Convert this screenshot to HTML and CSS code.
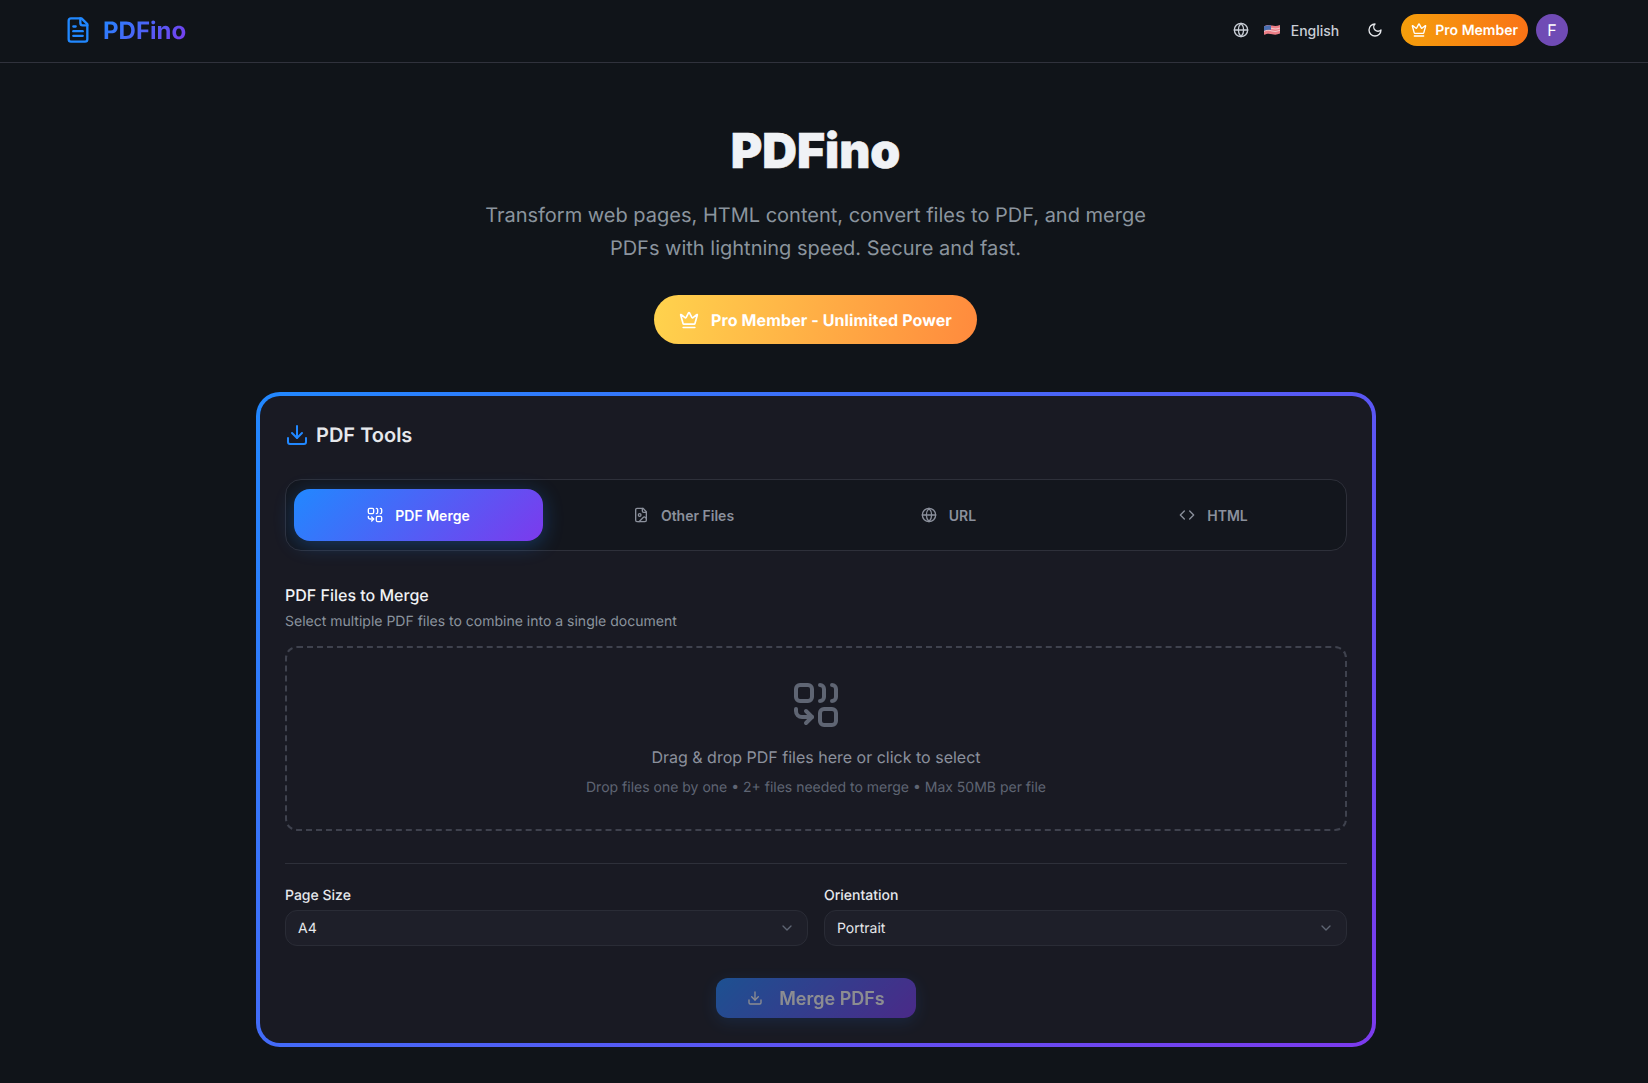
FILE: index.html
```html
<!DOCTYPE html>
<html lang="en">
<head>
  <meta charset="UTF-8">
  <meta name="viewport" content="width=device-width, initial-scale=1.0">
  <title>PDFino</title>
  <link rel="stylesheet" href="styles.css">
</head>
<body>
  <header class="topbar">
    <div class="topbar-inner">
      <a class="logo" href="#">
        <svg class="icon logo-icon" viewBox="0 0 24 24"><path d="M15 2H6a2 2 0 0 0-2 2v16a2 2 0 0 0 2 2h12a2 2 0 0 0 2-2V7Z"/><path d="M14 2v4a2 2 0 0 0 2 2h4"/><path d="M10 9H8"/><path d="M16 13H8"/><path d="M16 17H8"/></svg>
        <span class="logo-text">PDFino</span>
      </a>
      <div class="topbar-actions">
        <button class="lang">
          <svg class="icon lang-globe" viewBox="0 0 24 24"><circle cx="12" cy="12" r="10"/><path d="M12 2a14.5 14.5 0 0 0 0 20 14.5 14.5 0 0 0 0-20"/><path d="M2 12h20"/></svg>
          <svg class="flag" viewBox="0 0 16 12">
            <path d="M0 2.2C3 .8 5 .8 8 1.6s5 .6 8-.6v8.6c-3 1.2-5 1.4-8 .6s-5-.8-8 .6z" fill="#ec7f87"/>
            <path d="M0 4.6c3-1.4 5-1.4 8-.6s5 .6 8-.6v1c-3 1.2-5 1.4-8 .6s-5-.8-8 .6zM0 7c3-1.4 5-1.4 8-.6s5 .6 8-.6v1c-3 1.2-5 1.4-8 .6s-5-.8-8 .6z" fill="#f2c9cc"/>
            <path d="M0 2.2c2.500-1.100 4.500-1.200 7-.8v4.500c-2.500-.4-4.500-.3-7 .8z" fill="#4a6fb0"/>
          </svg>
          <span>English</span>
        </button>
        <button class="theme-toggle">
          <svg class="icon" viewBox="0 0 24 24"><path d="M12 3a6 6 0 0 0 9 9 9 9 0 1 1-9-9Z"/></svg>
        </button>
        <div class="pro-badge">
          <svg class="icon" viewBox="0 0 24 24"><path d="M11.562 3.266a.5.5 0 0 1 .876 0L15.39 8.87a1 1 0 0 0 1.516.294L21.183 5.5a.5.5 0 0 1 .798.519l-2.834 10.246a1 1 0 0 1-.956.734H5.81a1 1 0 0 1-.957-.734L2.02 6.02a.5.5 0 0 1 .798-.519l4.276 3.664a1 1 0 0 0 1.516-.294z"/><path d="M5 21h14"/></svg>
          <span>Pro Member</span>
        </div>
        <div class="avatar">F</div>
      </div>
    </div>
  </header>

  <main class="page">
    <section class="hero">
      <h1>PDFino</h1>
      <p>Transform web pages, HTML content, convert files to PDF, and merge PDFs with lightning speed. Secure and fast.</p>
      <div class="hero-pill">
        <svg class="icon" viewBox="0 0 24 24"><path d="M11.562 3.266a.5.5 0 0 1 .876 0L15.39 8.87a1 1 0 0 0 1.516.294L21.183 5.5a.5.5 0 0 1 .798.519l-2.834 10.246a1 1 0 0 1-.956.734H5.81a1 1 0 0 1-.957-.734L2.02 6.02a.5.5 0 0 1 .798-.519l4.276 3.664a1 1 0 0 0 1.516-.294z"/><path d="M5 21h14"/></svg>
        <span>Pro Member - Unlimited Power</span>
      </div>
    </section>

    <section class="tools-frame">
      <div class="tools-card">
        <h2 class="tools-title">
          <svg class="icon" viewBox="0 0 24 24"><path d="M21 15v4a2 2 0 0 1-2 2H5a2 2 0 0 1-2-2v-4"/><polyline points="7 10 12 15 17 10"/><line x1="12" y1="15" x2="12" y2="3"/></svg>
          PDF Tools
        </h2>

        <div class="tabs">
          <button class="tab is-active">
            <svg class="icon" viewBox="0 0 24 24"><rect width="8" height="8" x="2" y="2" rx="2"/><path d="M14 2c1.100 0 2 .9 2 2v4c0 1.100-.9 2-2 2"/><path d="M20 2c1.100 0 2 .9 2 2v4c0 1.100-.9 2-2 2"/><path d="M10 18H5c-1.700 0-3-1.300-3-3v-1"/><polyline points="7 21 10 18 7 15"/><rect width="8" height="8" x="14" y="14" rx="2"/></svg>
            PDF Merge
          </button>
          <button class="tab">
            <svg class="icon" viewBox="0 0 24 24"><path d="M15 2H6a2 2 0 0 0-2 2v16a2 2 0 0 0 2 2h12a2 2 0 0 0 2-2V7Z"/><path d="M14 2v4a2 2 0 0 0 2 2h4"/><circle cx="10" cy="12" r="2"/><path d="m20 17-1.296-1.296a2.41 2.41 0 0 0-3.408 0L9 22"/></svg>
            Other Files
          </button>
          <button class="tab">
            <svg class="icon" viewBox="0 0 24 24"><circle cx="12" cy="12" r="10"/><path d="M12 2a14.5 14.5 0 0 0 0 20 14.5 14.5 0 0 0 0-20"/><path d="M2 12h20"/></svg>
            URL
          </button>
          <button class="tab">
            <svg class="icon" viewBox="0 0 24 24"><polyline points="16 18 22 12 16 6"/><polyline points="8 6 2 12 8 18"/></svg>
            HTML
          </button>
        </div>

        <div class="files-head">
          <h3>PDF Files to Merge</h3>
          <p>Select multiple PDF files to combine into a single document</p>
        </div>

        <div class="dropzone">
          <svg class="icon" viewBox="0 0 24 24"><rect width="8" height="8" x="2" y="2" rx="2"/><path d="M14 2c1.100 0 2 .9 2 2v4c0 1.100-.9 2-2 2"/><path d="M20 2c1.100 0 2 .9 2 2v4c0 1.100-.9 2-2 2"/><path d="M10 18H5c-1.700 0-3-1.300-3-3v-1"/><polyline points="7 21 10 18 7 15"/><rect width="8" height="8" x="14" y="14" rx="2"/></svg>
          <p class="drop-main">Drag &amp; drop PDF files here or click to select</p>
          <p class="drop-hint">Drop files one by one • 2+ files needed to merge • Max 50MB per file</p>
        </div>

        <div class="options">
          <div class="field">
            <label>Page Size</label>
            <div class="select">
              <span>A4</span>
              <svg class="icon" viewBox="0 0 24 24"><path d="m6 9 6 6 6-6"/></svg>
            </div>
          </div>
          <div class="field">
            <label>Orientation</label>
            <div class="select">
              <span>Portrait</span>
              <svg class="icon" viewBox="0 0 24 24"><path d="m6 9 6 6 6-6"/></svg>
            </div>
          </div>
        </div>

        <div class="submit-row">
          <button class="submit" disabled>
            <svg class="icon" viewBox="0 0 24 24"><path d="M21 15v4a2 2 0 0 1-2 2H5a2 2 0 0 1-2-2v-4"/><polyline points="7 10 12 15 17 10"/><line x1="12" y1="15" x2="12" y2="3"/></svg>
            Merge PDFs
          </button>
        </div>
      </div>
    </section>
  </main>
</body>
</html>
```

FILE: styles.css
```css
* {
  margin: 0;
  padding: 0;
  box-sizing: border-box;
}

body {
  font-family: Inter, 'Noto Sans', sans-serif;
  background: #101419;
  color: #f0f2f5;
  overflow: hidden;
  text-rendering: geometricPrecision;
}

button {
  font-family: inherit;
  background: none;
  border: none;
  color: inherit;
}

.icon {
  fill: none;
  stroke: currentColor;
  stroke-width: 2;
  stroke-linecap: round;
  stroke-linejoin: round;
  flex-shrink: 0;
}

/* ヘッダー */
.topbar {
  height: 63px;
  border-bottom: 1px solid #30323c;
}

.topbar-inner {
  width: 1632px;
  height: 60px;
  padding: 0 64px;
  display: flex;
  align-items: center;
  justify-content: space-between;
}

.logo {
  display: flex;
  align-items: center;
  gap: 11px;
  text-decoration: none;
}

.logo-icon {
  width: 28px;
  height: 28px;
  color: #2188ff;
}

.logo-text {
  font-size: 24px;
  font-weight: 700;
  background: linear-gradient(135deg, #2188ff 0%, #7c3aed 100%);
  -webkit-background-clip: text;
  background-clip: text;
  color: transparent;
}

.topbar-actions {
  display: flex;
  align-items: center;
}

.lang {
  display: flex;
  align-items: center;
  font-size: 14px;
  font-weight: 500;
  color: #c9ced6;
}

.lang .lang-globe {
  width: 16px;
  height: 16px;
  margin-right: 15px;
}

.flag {
  width: 16px;
  height: 12px;
  margin-right: 11px;
}

.theme-toggle {
  display: flex;
  margin: 0 18px 0 28px;
  color: #e6e8ec;
}

.theme-toggle .icon {
  width: 16px;
  height: 16px;
}

.pro-badge {
  height: 32px;
  padding: 0 10px;
  display: flex;
  align-items: center;
  gap: 8px;
  border-radius: 16px;
  background: linear-gradient(90deg, #f59e0b 0%, #f97316 100%);
  color: #fff;
  font-size: 14px;
  font-weight: 600;
}

.pro-badge .icon {
  width: 16px;
  height: 16px;
}

.avatar {
  width: 32px;
  height: 32px;
  margin-left: 8px;
  border-radius: 50%;
  background: #704bb5;
  color: #fff;
  font-size: 16px;
  display: flex;
  align-items: center;
  justify-content: center;
}

/* ヒーロー */
.page {
  width: 1632px;
}

.hero {
  padding: 64px 1px 0 0;
  text-align: center;
}

.hero h1 {
  font-size: 48px;
  line-height: 48px;
  font-weight: 900;
  color: #f0f2f5;
  -webkit-text-stroke: 0.6px #f0f2f5;
}

.hero p {
  max-width: 672px;
  margin: 24px auto 0;
  font-size: 20px;
  line-height: 32.500px;
  color: #8b949e;
}

.hero-pill {
  width: 323px;
  height: 49px;
  margin: 31px auto 0;
  display: flex;
  align-items: center;
  justify-content: center;
  gap: 12px;
  border-radius: 25px;
  background: linear-gradient(100deg, #ffd34d 0%, #ff8a3d 100%);
  color: #fff;
  font-size: 16px;
  font-weight: 700;
  letter-spacing: 0.1px;
}

.hero-pill .icon {
  width: 20px;
  height: 20px;
}

/* ツールカード */
.tools-frame {
  width: 1120px;
  margin: 48px auto 0;
  padding: 4px;
  border-radius: 24px;
  background: linear-gradient(135deg, #2188ff 0%, #7c3aed 100%);
}

.tools-card {
  height: 647px;
  padding: 23px 25px;
  border-radius: 20px;
  background: #191a23;
}

.tools-title {
  display: flex;
  align-items: center;
  gap: 7px;
  height: 32px;
  font-size: 20px;
  font-weight: 600;
  color: #e6e8ec;
}

.tools-title .icon {
  width: 24px;
  height: 24px;
  color: #2188ff;
}

.tabs {
  margin-top: 28px;
  height: 72px;
  padding: 0 8px;
  display: flex;
  align-items: center;
  gap: 16px;
  border: 1px solid #2e303a;
  border-radius: 16px;
  background: #13161d;
}

.tab {
  flex: 1;
  height: 52px;
  display: flex;
  align-items: center;
  justify-content: center;
  gap: 12px;
  border-radius: 16px;
  font-size: 14px;
  font-weight: 600;
  color: #8b909c;
}

.tab .icon {
  width: 16px;
  height: 16px;
}

.tab.is-active {
  background: linear-gradient(135deg, #2188ff 0%, #7c3aed 100%);
  color: #fff;
  box-shadow: 0 4px 20px rgba(33, 136, 255, 0.3);
}

.files-head {
  margin-top: 32px;
}

.files-head h3 {
  font-size: 16px;
  line-height: 24px;
  font-weight: 500;
  color: #f0f2f5;
}

.files-head p {
  margin-top: 5px;
  font-size: 14px;
  line-height: 20px;
  color: #8b949e;
}

.dropzone {
  margin-top: 14px;
  height: 185px;
  padding-top: 33px;
  display: flex;
  flex-direction: column;
  align-items: center;
  border: 2px dashed #3f424e;
  border-radius: 12px;
}

.dropzone .icon {
  width: 48px;
  height: 48px;
  color: #5f6573;
}

.drop-main {
  margin-top: 16px;
  font-size: 16px;
  line-height: 24px;
  color: #8b909c;
}

.drop-hint {
  margin-top: 9px;
  font-size: 14px;
  line-height: 20px;
  color: #5f6573;
}

.options {
  margin-top: 32px;
  padding-top: 22px;
  display: grid;
  grid-template-columns: 1fr 1fr;
  gap: 16px;
  border-top: 1px solid #2e303a;
}

.field label {
  display: block;
  font-size: 14px;
  line-height: 20px;
  font-weight: 500;
  color: #e6e8ec;
}

.select {
  margin-top: 4px;
  height: 36px;
  padding: 0 12px;
  display: flex;
  align-items: center;
  justify-content: space-between;
  border: 1px solid #2a2c36;
  border-radius: 12px;
  background: #1e1f29;
  font-size: 14px;
  color: #e6e8ec;
}

.select .icon {
  width: 16px;
  height: 16px;
  color: #5f6573;
}

.submit-row {
  margin-top: 32px;
  display: flex;
  justify-content: center;
}

.submit {
  width: 200px;
  height: 40px;
  display: flex;
  align-items: center;
  justify-content: center;
  gap: 16px;
  border-radius: 12px;
  background: linear-gradient(135deg, #2188ff 0%, #7c3aed 100%);
  box-shadow: 0 4px 16px rgba(33, 136, 255, 0.25);
  color: #fff;
  font-size: 18px;
  font-weight: 600;
  opacity: 0.5;
}

.submit .icon {
  width: 16px;
  height: 16px;
}
```
